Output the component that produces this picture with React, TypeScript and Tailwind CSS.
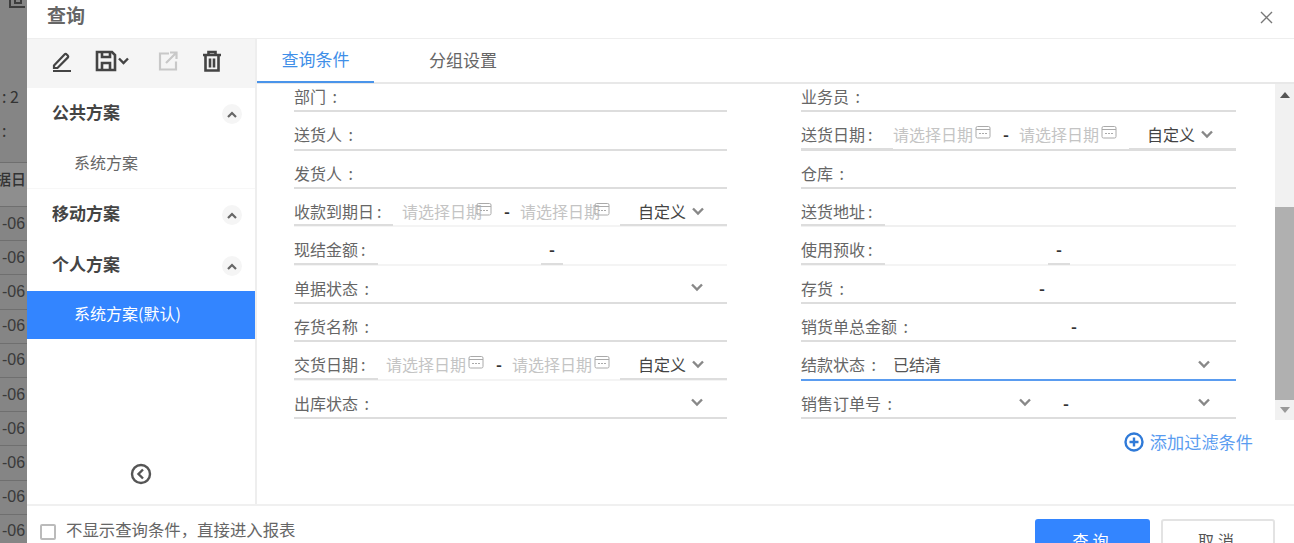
import type { ReactNode } from 'react';

const font = { fontFamily: '"Noto Sans CJK SC", "Noto Sans", sans-serif' };

const Chevron = ({ className = 'text-[#888]' }: { className?: string }) => (
  <svg width="14" height="9" viewBox="0 0 14 9" fill="none" className={className}>
    <path d="M2 1.5l5 5 5-5" stroke="currentColor" strokeWidth="2.4" />
  </svg>
);

const CalendarIcon = () => (
  <svg width="16" height="14" viewBox="0 0 16 14" fill="none" className="text-[#aaa] shrink-0">
    <rect x="1" y="1.5" width="14" height="11.5" rx="1.5" stroke="currentColor" />
    <path d="M1 4.5h14" stroke="currentColor" />
    <path d="M4 8.5h8" stroke="currentColor" strokeDasharray="2 1" />
  </svg>
);

const LabelText = ({ text }: { text: string }) => (
  <>
    {text} <span className="ml-[3px]">:</span>
  </>
);

const Row = ({ children, line = 'border-[#ddd]' }: { children: ReactNode; line?: string }) => (
  <div className={`h-[38.33px] pt-[8px] flex items-center border-b-2 ${line}`}>{children}</div>
);

const TextField = ({ label }: { label: string }) => (
  <Row>
    <span className="text-[#666]">
      <LabelText text={label} />
    </span>
  </Row>
);

const SelectField = ({ label }: { label: string }) => (
  <Row>
    <span className="text-[#666]">
      <LabelText text={label} />
    </span>
    <span className="ml-auto mr-[23px]">
      <Chevron />
    </span>
  </Row>
);

const RangeField = ({ label, gap }: { label: string; gap: string }) => (
  <Row line="border-[#f4f4f4]">
    <div className="w-[84px] h-full shrink-0 flex items-center whitespace-nowrap text-[#666] -mb-[2px] border-b-2 border-[#ddd]">
      <LabelText text={label} />
    </div>
    <div className={gap} />
    <div className="h-full w-[22px] -ml-[2px] flex items-center justify-center -mb-[2px] border-b-2 border-[#ddd] text-[#333] font-bold">-</div>
  </Row>
);

const DateInput = ({ w, iconMl }: { w: string; iconMl: string }) => (
  <div className={`flex items-center shrink-0 text-[#c4c4c4] ${w}`}>
    <span className="whitespace-nowrap">请选择日期</span>
    <span className={`-mt-[4px] ${iconMl}`}>
      <CalendarIcon />
    </span>
  </div>
);

const DateField = ({
  label,
  underline,
  pad,
  inputW,
  iconMl,
  full,
}: {
  label: string;
  underline: string;
  pad: string;
  inputW: string;
  iconMl: string;
  full?: boolean;
}) => (
  <Row line={full ? 'border-[#ddd]' : 'border-[#f4f4f4]'}>
    <div className={`h-full flex items-center shrink-0 whitespace-nowrap text-[#666] -mb-[2px] border-b-2 border-[#ddd] ${underline}`}>
      <LabelText text={label} />
    </div>
    <div className={`shrink-0 ${pad}`} />
    <DateInput w={inputW} iconMl={iconMl} />
    <div className="w-[22px] -ml-[2px] mr-[2px] h-full flex items-center justify-center shrink-0 text-[#333] font-bold">-</div>
    <DateInput w={inputW} iconMl={iconMl} />
    <div className="ml-auto w-[107px] h-full flex items-center gap-[5px] pl-[18px] text-[#444] -mb-[2px] border-b-2 border-[#ddd]">
      自定义
      <Chevron />
    </div>
  </Row>
);

const SectionTitle = ({ title, h, up }: { title: string; h: string; up: string }) => (
  <div className={`flex items-center justify-between pl-[25px] pr-[13px] ${h}`}>
    <span className={`text-[17px] font-bold text-[#444] ${up}`}>{title}</span>
    <span className="w-5 h-5 rounded-full bg-[#f5f5f5] flex items-center justify-center">
      <svg width="10" height="7" viewBox="0 0 10 7" fill="none" className="text-[#666]">
        <path d="M1 6l4-4 4 4" stroke="currentColor" strokeWidth="2.2" />
      </svg>
    </span>
  </div>
);

const Backdrop = () => (
  <div className="w-[27px] shrink-0 bg-[#858585] overflow-hidden text-[#333] text-[16px] whitespace-nowrap">
    <div className="h-[162px] pl-[2px] leading-[34px]">
      <div className="h-[79px] -ml-[2px]">
        <svg width="27" height="9" viewBox="0 0 27 9" fill="none" stroke="#3d3d3d" strokeWidth="2" className="block">
          <path d="M10 0v7h15" />
          <path d="M15 0v3h6V0" />
        </svg>
      </div>
      <div>: 2</div>
      <div>:</div>
    </div>
    <div className="h-[45px] pb-[11px] flex items-center text-[15px] -indent-[4px] bg-[#8e8e8e] border-y border-[#6f6f6f] font-medium">据日</div>
    {Array.from({ length: 10 }).map((_, i) => (
      <div key={i} className="h-[34.2px] flex items-center pl-[2px] border-b border-[#6f6f6f] text-[#3a3a3a]" style={{ fontFamily: '"Liberation Sans", sans-serif' }}>
        -06
      </div>
    ))}
  </div>
);

const Toolbar = () => (
  <div className="h-[49px] pb-[5px] bg-[#f5f5f5] flex items-center pl-[24px] text-[#444]">
    <svg width="22" height="22" viewBox="0 0 22 22" fill="none" stroke="currentColor" strokeWidth="2.2">
      <path d="M3 15.5L13.5 4.5c.8-.8 1.5-.8 2.2 0l1 1c.7.7.7 1.4 0 2.1L6.5 18H3z" />
      <path d="M2 21h18" strokeWidth="2" />
    </svg>
    <svg width="22" height="22" viewBox="0 0 22 22" fill="none" stroke="currentColor" strokeWidth="2.6" className="ml-[22px]">
      <path d="M2 2h15l3 3v15H2z" />
      <path d="M7 2v5h8V2M7 20v-7h8v7" />
    </svg>
    <svg width="11" height="8" viewBox="0 0 11 8" fill="none" stroke="currentColor" strokeWidth="2.4" className="ml-[1px]">
      <path d="M1 1.5l4.5 4.5L10 1.5" />
    </svg>
    <svg width="20" height="20" viewBox="0 0 20 20" fill="none" stroke="#c8c8c8" strokeWidth="2.2" className="ml-[29px]">
      <path d="M11 2.5H2v16h16v-8" />
      <path d="M8 12L18 2M12 1.5h6.5V8" />
    </svg>
    <svg width="20" height="22" viewBox="0 0 20 22" fill="none" stroke="currentColor" strokeWidth="2.6" className="ml-[24px]">
      <path d="M1 5h18M6.5 5V2h7v3M3.5 5v15.5h13V5M8 8.5v9M12 8.5v9" />
    </svg>
  </div>
);

const Sidebar = () => (
  <div className="w-[230px] shrink-0 border-r-2 border-[#eee] flex flex-col">
    <Toolbar />
    <SectionTitle title="公共方案" h="h-[52px]" up="-mt-[4px]" />
    <div className="h-[49px] pl-[47px] pb-[5px] flex items-center text-[#666] border-b border-[#f7f7f7]">系统方案</div>
    <SectionTitle title="移动方案" h="h-[52px]" up="-mt-[4px]" />
    <SectionTitle title="个人方案" h="h-[50px]" up="-mt-[5px]" />
    <div className="h-[48px] pl-[47px] pb-[4px] flex items-center bg-[#3385ff] text-white">系统方案(默认)</div>
    <div className="flex-1 flex items-start justify-center pt-[124px] text-[#555]">
      <svg width="22" height="22" viewBox="0 0 22 22" fill="none" stroke="currentColor" strokeWidth="2.4">
        <circle cx="11" cy="11" r="9" />
        <path d="M13 6.5L8.5 11l4.5 4.5" />
      </svg>
    </div>
  </div>
);

const Form = () => (
  <div className="flex-1 flex flex-col">
    <div className="h-[45px] flex border-b-2 border-[#e8e8e8] text-[17px]">
      <div className="w-[117px] h-[44px] pb-[2px] flex items-center justify-center text-[#3f8fe8] border-b-2 border-[#4a94ea]">查询条件</div>
      <div className="ml-[55px] h-[43px] pb-[2px] flex items-center text-[#666]">分组设置</div>
    </div>
    <div className="flex h-[337px] overflow-hidden">
      <div className="flex-1 min-w-0 pl-[37px] overflow-hidden">
        <div className="flex gap-[74px] -mt-[10px]">
          <div className="w-[433px]">
            <TextField label="部门" />
            <TextField label="送货人" />
            <TextField label="发货人" />
            <DateField label="收款到期日" underline="w-[99px]" pad="w-[9px]" inputW="w-[96px]" iconMl="-ml-[6px]" />
            <RangeField label="现结金额" gap="w-[165px]" />
            <SelectField label="单据状态" />
            <TextField label="存货名称" />
            <DateField label="交货日期" underline="w-[84px]" pad="w-[8px]" inputW="w-[104px]" iconMl="ml-[2px]" />
            <SelectField label="出库状态" />
          </div>
          <div className="w-[435px]">
            <TextField label="业务员" />
            <DateField label="送货日期" underline="w-[92px]" pad="w-0" inputW="w-[104px]" iconMl="ml-[2px]" full />
            <TextField label="仓库" />
            <Row line="border-[#f0f0f0]">
              <div className="w-[84px] h-full flex items-center whitespace-nowrap text-[#666] -mb-[2px] border-b-2 border-[#ddd]">
                <LabelText text="送货地址" />
              </div>
            </Row>
            <RangeField label="使用预收" gap="w-[165px]" />
            <Row>
              <span className="text-[#666]">
                <LabelText text="存货" />
              </span>
              <span className="ml-[195px] font-bold text-[#333]">-</span>
            </Row>
            <Row>
              <span className="text-[#666]">
                <LabelText text="销货单总金额" />
              </span>
              <span className="ml-[163px] font-bold text-[#333]">-</span>
            </Row>
            <Row line="border-[#5a9cf0]">
              <span className="text-[#666] w-[92px]">
                <LabelText text="结款状态" />
              </span>
              <span className="text-[#555]">已结清</span>
              <span className="ml-auto mr-[25px]">
                <Chevron />
              </span>
            </Row>
            <Row>
              <span className="text-[#666] w-[217px]">
                <LabelText text="销售订单号" />
              </span>
              <Chevron />
              <span className="ml-[31px] font-bold text-[#333]">-</span>
              <span className="ml-auto mr-[25px]">
                <Chevron />
              </span>
            </Row>
          </div>
        </div>
      </div>
      <div className="w-[19px] shrink-0 bg-[#f1f1f1] flex flex-col h-[336px]">
        <div className="h-[123px] flex justify-center pt-[8px]">
          <span className="w-0 h-0 border-x-[5px] border-x-transparent border-b-[6px] border-b-[#555]" />
        </div>
        <div className="h-[193px] bg-[#b0b0b0]" />
        <div className="flex-1 flex justify-center pt-[7px]">
          <span className="w-0 h-0 border-x-[5px] border-x-transparent border-t-[6px] border-t-[#999]" />
        </div>
      </div>
    </div>
    <div className="flex items-center justify-end gap-[6px] pr-[41px] h-[42px] text-[17.2px] text-[#5a9cf0]">
      <svg width="20" height="20" viewBox="0 0 20 20" fill="none" stroke="#2f7ad8" strokeWidth="2.4">
        <circle cx="10" cy="10" r="8.5" />
        <path d="M5.5 10h9M10 5.5v9" />
      </svg>
      添加过滤条件
    </div>
  </div>
);

export default function App() {
  return (
    <div className="w-[1294px] h-[543px] flex overflow-hidden bg-white text-[16px]" style={font}>
      <Backdrop />
      <div className="flex-1 flex flex-col min-w-0">
        <div className="h-[39px] shrink-0 flex items-center justify-between pl-[20px] pr-[21px] border-b border-[#eee]">
          <span className="text-[19px] font-bold text-[#666] -mt-[7px]">查询</span>
          <svg width="13" height="13" viewBox="0 0 13 13" fill="none" stroke="#777" strokeWidth="1.4" className="-mt-[4px]">
            <path d="M1 1l11 11M12 1L1 12" />
          </svg>
        </div>
        <div className="h-[467px] shrink-0 flex border-b-2 border-[#f0f0f0]">
          <Sidebar />
          <Form />
        </div>
        <div className="flex-1 flex pl-[13px] pr-[19px]">
          <div className="flex items-center gap-[10px] h-[50px] text-[#666] text-[16.4px]">
            <span className="w-4 h-4 border-2 border-[#bbb] rounded-[2px] mt-[2px]" />
            <span className="-mt-[3px]">不显示查询条件，直接进入报表</span>
          </div>
          <div className="ml-auto flex gap-[11px] mt-[13px]">
            <div className="w-[115px] h-[42px] rounded-[3px] bg-[#3385ff] text-white flex items-center justify-center tracking-[4px]">查询</div>
            <div className="w-[114px] h-[42px] rounded-[3px] border-2 border-[#e3e3e3] text-[#555] flex items-center justify-center tracking-[4px]">取消</div>
          </div>
        </div>
      </div>
    </div>
  );
}
